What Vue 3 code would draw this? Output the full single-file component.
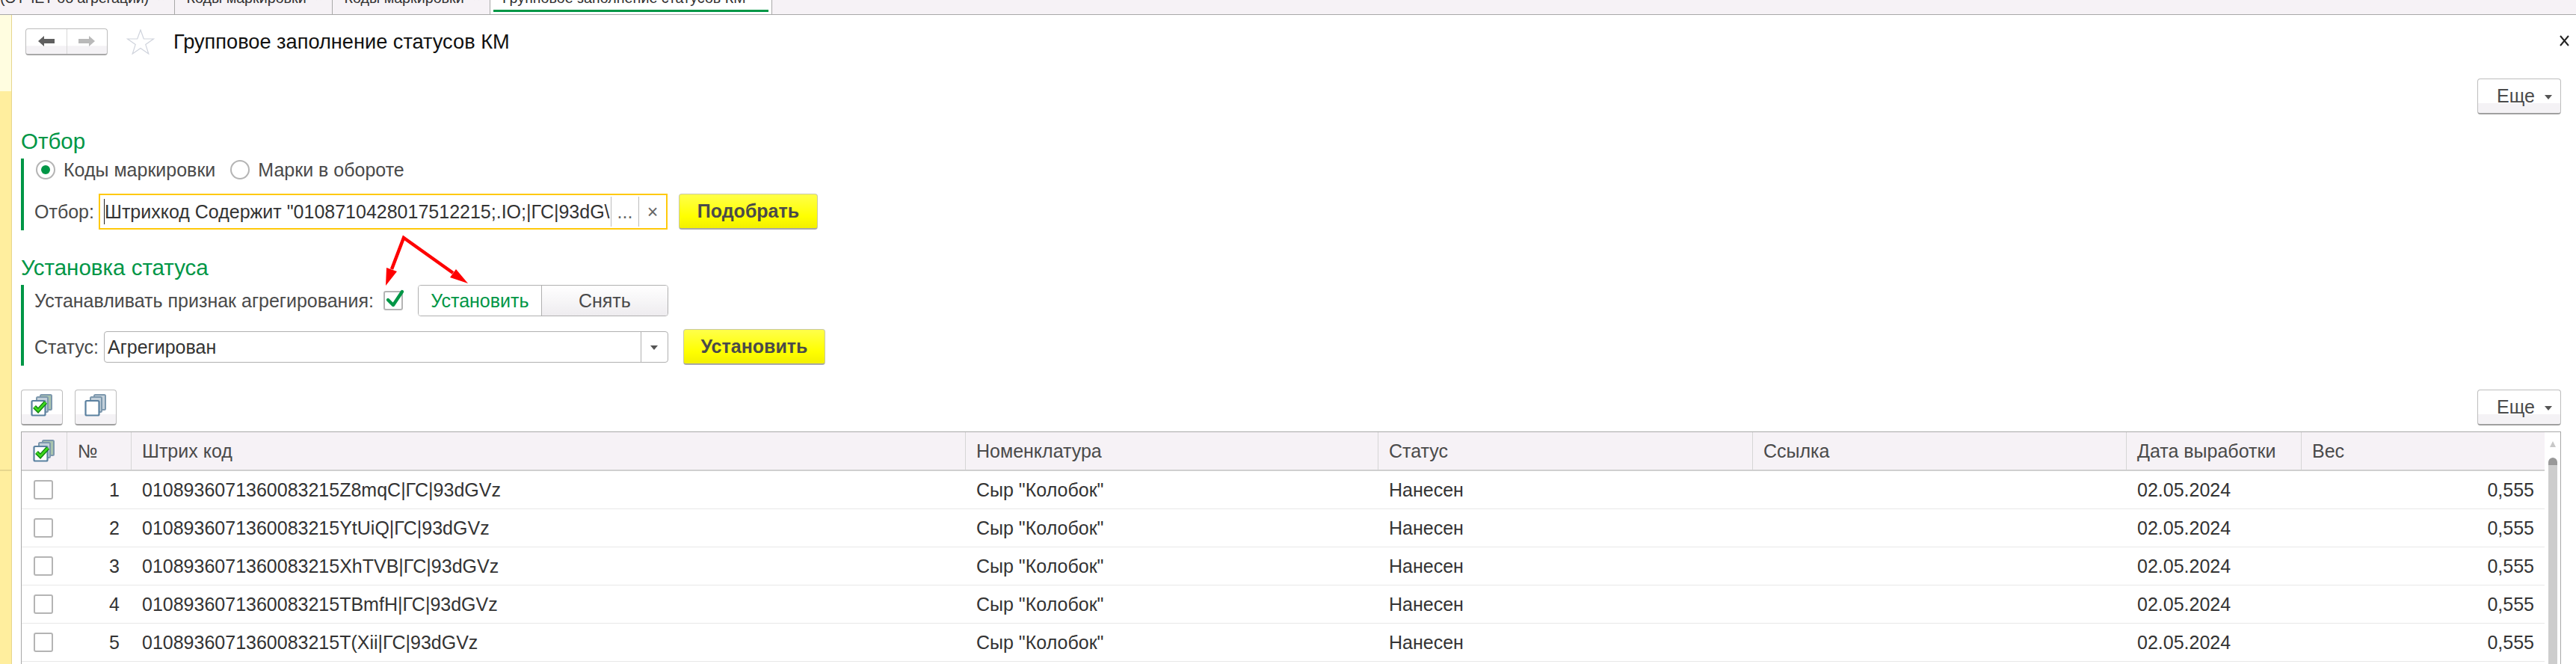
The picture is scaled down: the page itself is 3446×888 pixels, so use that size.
<script setup>
const tabs = [
  { text: '(ОТЧЕТ об агрегации)', cls: 'tab-a' },
  { text: 'Коды маркировки', cls: 'tab-b' },
  { text: 'Коды маркировки', cls: 'tab-c' },
  { text: 'Групповое заполнение статусов КМ', cls: 'tab-d' }
]
const columns = ['№', 'Штрих код', 'Номенклатура', 'Статус', 'Ссылка', 'Дата выработки', 'Вес']
const rows = [
  '0108936071360083215Z8mqC|ГС|93dGVz',
  '0108936071360083215YtUiQ|ГС|93dGVz',
  '0108936071360083215XhTVB|ГС|93dGVz',
  '0108936071360083215TBmfH|ГС|93dGVz',
  '0108936071360083215T(Xii|ГС|93dGVz'
]
</script>

<template>
  <div class="app">
    <div class="tabs">
      <div v-for="t in tabs" :key="t.cls" class="tab" :class="t.cls">
        <span class="tab-text">{{ t.text }}</span><span class="tab-x">×</span>
      </div>
    </div>
    <div class="body">
      <div class="side"><div class="side-a"></div><div class="side-b"></div><div class="side-c"></div></div>
      <div class="main">
        <div class="head">
          <div class="nav">
            <div class="nav-cell">
              <svg width="22" height="14" viewBox="0 0 22 14"><path d="M0 7 8 0V4H22V10H8V14Z" fill="#5f5f5f"/></svg>
            </div>
            <div class="nav-cell">
              <svg width="22" height="14" viewBox="0 0 22 14"><path d="M22 7 14 0V4H0V10H14V14Z" fill="#b9b9b9"/></svg>
            </div>
          </div>
          <svg class="star" width="38" height="34" viewBox="0 0 38 34"><path d="M19 1 23.3 13H36.5L25.8 20.6 29.8 33 19 25.4 8.2 33 12.2 20.6 1.5 13H14.7Z" fill="#fff" stroke="#cfd3dc" stroke-width="1.2"/></svg>
          <div class="title">Групповое заполнение статусов КМ</div>
          <svg class="close" width="13" height="15" viewBox="0 0 13 15"><path d="M1 1 12 14M12 1 1 14" stroke="#222" stroke-width="2" fill="none"/></svg>
        </div>

        <div class="more-row">
          <div class="btn more">Еще<span class="tri"></span></div>
        </div>

        <div class="sec-title first">Отбор</div>
        <div class="group group-a">
          <div class="radios">
            <span class="radio on"></span><span class="radio-label">Коды маркировки</span>
            <span class="radio"></span><span class="radio-label">Марки в обороте</span>
          </div>
          <div class="filter-row">
            <span class="lbl">Отбор:</span>
            <div class="input">
              <div class="input-text">Штрихкод Содержит "0108710428017512215;.IO;|ГС|93dG\</div>
              <div class="input-btn dots">...</div>
              <div class="input-btn cross">×</div>
            </div>
            <div class="yellow pick">Подобрать</div>
          </div>
        </div>

        <div class="sec-title second">Установка статуса</div>
        <div class="group group-b">
          <div class="flag-row">
            <span class="lbl">Устанавливать признак агрегирования:</span>
            <span class="check">
              <svg class="tick" width="28" height="26" viewBox="0 0 28 26"><path d="M6 15 13 22 25 4" fill="none" stroke="#009646" stroke-width="4.4" stroke-linecap="round" stroke-linejoin="round"/></svg>
            </span>
            <div class="toggle">
              <div class="toggle-on">Установить</div>
              <div class="toggle-off">Снять</div>
            </div>
          </div>
          <div class="status-row">
            <span class="lbl">Статус:</span>
            <div class="select">
              <div class="select-text">Агрегирован</div>
              <div class="select-btn"><span class="tri"></span></div>
            </div>
            <div class="yellow apply">Установить</div>
          </div>
        </div>

        <div class="tools">
          <div class="btn tool">
            <svg width="30" height="30" viewBox="0 0 30 30">
              <rect x="13" y="1" width="15" height="20" rx="1.5" fill="#a9c4ae" stroke="#7d98ad" stroke-width="2"/>
              <rect x="8" y="4" width="15" height="20" rx="1.5" fill="#c3d0da" stroke="#7d98ad" stroke-width="2"/>
              <rect x="1.5" y="9" width="18" height="19.5" rx="1.5" fill="#fff" stroke="#5b81a0" stroke-width="2.2"/>
              <path d="M5 17 10 22 20 11" fill="none" stroke="#0d7d10" stroke-width="5.5"/>
              <path d="M5 17 10 22 20 11" fill="none" stroke="#3ed81e" stroke-width="2.8"/>
            </svg>
          </div>
          <div class="btn tool">
            <svg width="30" height="30" viewBox="0 0 30 30">
              <rect x="13" y="1" width="15" height="20" rx="1.5" fill="#c3d0da" stroke="#7d98ad" stroke-width="2"/>
              <rect x="8" y="4" width="15" height="20" rx="1.5" fill="#c3d0da" stroke="#7d98ad" stroke-width="2"/>
              <rect x="1.5" y="9" width="18" height="19.5" rx="1.5" fill="#fff" stroke="#5b81a0" stroke-width="2.2"/>
            </svg>
          </div>
          <div class="btn more push">Еще<span class="tri"></span></div>
        </div>

        <div class="table">
          <div class="grid">
            <div class="line header">
              <div class="cell c0">
                <svg width="30" height="30" viewBox="0 0 30 30">
                  <rect x="13" y="1" width="15" height="20" rx="1.5" fill="#a9c4ae" stroke="#7d98ad" stroke-width="2"/>
                  <rect x="8" y="4" width="15" height="20" rx="1.5" fill="#c3d0da" stroke="#7d98ad" stroke-width="2"/>
                  <rect x="1.5" y="9" width="18" height="19.5" rx="1.5" fill="#fff" stroke="#5b81a0" stroke-width="2.2"/>
                  <path d="M5 17 10 22 20 11" fill="none" stroke="#0d7d10" stroke-width="5.5"/>
                  <path d="M5 17 10 22 20 11" fill="none" stroke="#3ed81e" stroke-width="2.8"/>
                </svg>
              </div>
              <div v-for="c in columns" :key="c" class="cell">{{ c }}</div>
            </div>
            <div v-for="(r, i) in rows" :key="r" class="line row">
              <div class="cell c0"><span class="box"></span></div>
              <div class="cell num">{{ i + 1 }}</div>
              <div class="cell">{{ r }}</div>
              <div class="cell">Сыр "Колобок"</div>
              <div class="cell">Нанесен</div>
              <div class="cell"></div>
              <div class="cell">02.05.2024</div>
              <div class="cell num w">0,555</div>
            </div>
          </div>
          <div class="scroll">
            <span class="up"></span>
            <div class="track"><div class="cap"></div></div>
          </div>
        </div>
      </div>
    </div>
    <svg class="arrows" width="130" height="80" viewBox="0 0 130 80">
      <path d="M19 50 35 8 101 55" fill="none" stroke="#fe0000" stroke-width="4.5" stroke-linejoin="miter"/>
      <path d="M11 72 12 48 26 53Z" fill="#fe0000"/>
      <path d="M121 69 105 50 97 61Z" fill="#fe0000"/>
    </svg>
  </div>
</template>

<style>
html, body { margin: 0; background: #fff; }
</style>

<style scoped>
.app { position: relative; width: 3446px; height: 888px; overflow: hidden; display: flex; flex-direction: column; background: #fff; font-family: "Liberation Sans", Arial, sans-serif; font-size: 25px; color: #333; }

.tabs { flex: none; display: flex; height: 20px; box-sizing: border-box; background: #f6f2f6; border-bottom: 1px solid #a8a8a8; overflow: hidden; }
.tab { flex: none; box-sizing: border-box; height: 19px; border-right: 1px solid #a8a8a8; display: flex; justify-content: flex-end; padding-right: 13px; gap: 12px; color: #333; font-size: 19.7px; line-height: 20px; }
.tab-text { margin-top: -13px; white-space: nowrap; }
.tab-x { margin-top: -13px; font-size: 16px; color: #888; }
.tab-a { width: 234px; letter-spacing: -0.2px; }
.tab-b { width: 211px; }
.tab-c { width: 211px; }
.tab-d { width: 377px; background: #fff; position: relative; }
.tab-d::after { content: ""; position: absolute; left: 4px; right: 4px; top: 13px; height: 3px; background: #009646; }

.body { flex: 1; display: flex; min-height: 0; }
.side { flex: none; width: 16px; box-sizing: border-box; border-right: 1px solid #e6d68e; display: flex; flex-direction: column; }
.side-a { height: 102px; background: #fffde0; }
.side-b { height: 506px; background: #ffee9e; border-bottom: 2px solid #e6d68e; }
.side-c { flex: 1; background: #ffee9e; }

.main { flex: 1; min-width: 0; box-sizing: border-box; padding: 18px 20px 0 12px; }

.head { display: flex; align-items: center; height: 36px; }
.nav { display: flex; width: 110px; height: 36px; margin-left: 6px; box-sizing: border-box; border: 1px solid #bdbdbd; border-bottom: 2px solid #a8a8a8; border-radius: 4px; background: linear-gradient(#fff 65%, #f4f2f5 70%); }
.nav-cell { flex: 1; display: flex; align-items: center; justify-content: center; padding-bottom: 2px; }
.nav-cell:first-child { border-right: 1px solid #d8d8d8; }
.star { margin-left: 25px; flex: none; }
.title { margin-left: 25px; font-size: 27.2px; color: #111; white-space: nowrap; }
.close { margin-left: auto; margin-right: -11px; margin-top: -4px; }

.more-row { display: flex; justify-content: flex-end; margin-top: 31px; }
.btn { box-sizing: border-box; border: 1px solid #bdbdbd; border-bottom: 2px solid #a0a0a0; border-radius: 4px; background: linear-gradient(#fff 70%, #f4f2f5 72%); color: #4a4a4a; display: flex; align-items: center; justify-content: center; }
.more { width: 112px; height: 48px; padding-left: 14px; gap: 13px; }
.tri { width: 0; height: 0; border-left: 5px solid transparent; border-right: 5px solid transparent; border-top: 6px solid #555; margin-top: 2px; }

.sec-title { height: 34px; line-height: 34px; font-size: 29.5px; color: #009646; white-space: nowrap; }
.sec-title.first { margin-top: 19px; }
.sec-title.second { margin-top: 33px; }

.group { border-left: 4px solid #009646; padding-left: 14px; color: #4a4a4a; }
.group-a { height: 96px; margin-top: 6px; }
.group-b { height: 108px; margin-top: 6px; }

.radios { height: 30px; display: flex; align-items: center; margin-left: 2px; }
.radio { flex: none; width: 26px; height: 26px; box-sizing: border-box; border: 2px solid #b4b4b4; border-radius: 50%; display: flex; align-items: center; justify-content: center; background: #fff; }
.radio.on::after { content: ""; width: 12px; height: 12px; border-radius: 50%; background: #009646; }
.radio-label { margin-left: 11px; margin-right: 20px; white-space: nowrap; }

.filter-row { display: flex; align-items: center; height: 48px; margin-top: 17px; }
.lbl { white-space: nowrap; }
.input { width: 761px; height: 48px; margin-left: 6px; box-sizing: border-box; border: 2px solid #ffc90a; display: flex; align-items: center; background: #fff; }
.input-text { width: 678px; flex: none; box-sizing: border-box; margin-left: 5px; border-left: 1px solid #222; line-height: 34px; overflow: hidden; white-space: nowrap; color: #333; }
.input-btn { flex: none; height: 40px; border-left: 1px solid #bdbdbd; display: flex; align-items: center; justify-content: center; color: #666; }
.dots { width: 36px; }
.cross { width: 36px; }
.yellow { box-sizing: border-box; height: 48px; border: 1px solid #c8c8a8; border-bottom: 2px solid #a8a8a8; border-radius: 4px; background: linear-gradient(#ffff4a, #ffff00 65%, #f3f000); color: #4a4a4a; font-weight: 700; display: flex; align-items: center; justify-content: center; white-space: nowrap; }
.pick { width: 186px; margin-left: 15px; }
.apply { width: 190px; margin-left: 20px; }

.flag-row { display: flex; align-items: center; height: 42px; }
.check { flex: none; width: 26px; height: 26px; box-sizing: border-box; border: 2px solid #b4b4b4; border-radius: 3px; margin-left: 13px; margin-top: -1px; position: relative; }
.tick { position: absolute; left: -2px; top: -5px; overflow: visible; }
.toggle { display: flex; width: 335px; height: 42px; margin-left: 20px; box-sizing: border-box; border: 1px solid #b0b0b0; border-radius: 4px; overflow: hidden; }
.toggle-on { width: 164px; border-right: 1px solid #b0b0b0; display: flex; align-items: center; justify-content: center; color: #009646; background: #fff; }
.toggle-off { flex: 1; display: flex; align-items: center; justify-content: center; background: linear-gradient(#fff, #eeecef); }

.status-row { display: flex; align-items: center; height: 48px; margin-top: 17px; }
.select { width: 755px; height: 42px; margin-left: 7px; box-sizing: border-box; border: 1px solid #b0b0b0; border-radius: 4px; display: flex; align-items: center; background: #fff; }
.select-text { flex: 1; padding-left: 4px; color: #333; }
.select-btn { width: 35px; height: 100%; border-left: 1px solid #b0b0b0; display: flex; align-items: center; justify-content: center; }

.tools { display: flex; gap: 16px; margin-top: 32px; }
.tool { width: 56px; height: 48px; padding-bottom: 5px; }
.push { margin-left: auto; }

.table { display: flex; margin-top: 8px; box-sizing: border-box; border: 1px solid #a8a8a8; border-bottom: 0; height: 320px; }
.grid { width: 3375px; flex: none; }
.line { display: grid; grid-template-columns: 61px 86px 1116px 552px 501px 500px 234px 325px; }
.header { background: #f6f2f6; border-bottom: 2px solid #cfcfcf; height: 50px; color: #4a4a4a; }
.header .cell { border-right: 1px solid #d6d6d6; }
.header .cell:last-child { border-right: 0; }
.row { height: 50px; border-bottom: 1px solid #e8e8e8; }
.cell { display: flex; align-items: center; padding-left: 14px; white-space: nowrap; overflow: hidden; min-width: 0; box-sizing: border-box; }
.c0 { padding: 0; justify-content: center; }
.c0 svg { margin-left: -1px; }
.num { justify-content: flex-end; padding: 0 16px 0 0; }
.num.w { padding-right: 14px; }
.box { width: 26px; height: 26px; box-sizing: border-box; border: 2px solid #b4b4b4; border-radius: 3px; margin-left: -3px; }

.scroll { flex: 1; display: flex; flex-direction: column; align-items: center; position: relative; }
.up { width: 0; height: 0; border-left: 4px solid transparent; border-right: 4px solid transparent; border-bottom: 8px solid #c8c8c8; margin-top: 12px; }
.track { width: 12px; flex: 1; margin-top: 14px; background: #cdcdcd; border-radius: 6px 6px 0 0; overflow: hidden; }
.cap { height: 10px; background: #999; border-radius: 6px 6px 0 0; }

.arrows { position: absolute; left: 505px; top: 310px; }
</style>
